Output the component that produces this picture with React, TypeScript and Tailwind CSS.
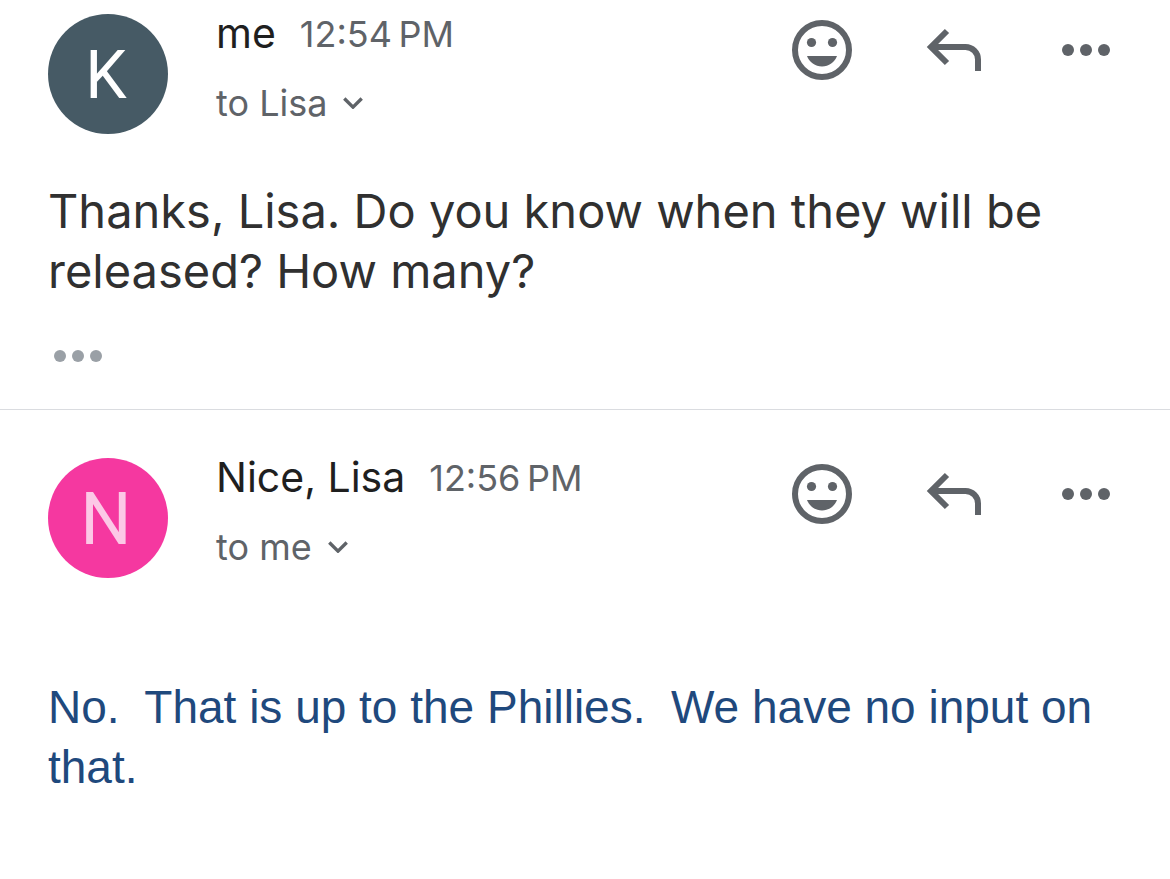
interface Message {
  id: string;
  initial: string;
  avatarClass: string;
  sender: string;
  time: string;
  recipient: string;
  body: string;
  bodyClass: string;
  hasQuoted: boolean;
}

const messages: Message[] = [
  {
    id: 'first',
    initial: 'K',
    avatarClass: 'bg-[#465a65] pt-0.5 pr-1 text-[66px] text-white',
    sender: 'me',
    time: '12:54\u2009PM',
    recipient: 'to Lisa',
    body: 'Thanks, Lisa. Do you know when they will be released? How many?',
    bodyClass: 'mt-[47px] text-[47px] text-[#303030]',
    hasQuoted: true,
  },
  {
    id: 'second',
    initial: 'N',
    avatarClass: 'bg-[#f538a0] pt-1 pr-1 text-[72px] text-[#fcc8e6]',
    sender: 'Nice, Lisa',
    time: '12:56\u2009PM',
    recipient: 'to me',
    body: 'No.\u00a0 That is up to the Phillies.\u00a0 We have no input on that.',
    bodyClass: "mt-[99px] font-['Liberation_Sans',Arial,sans-serif] text-[46px] text-[#1f497d]",
    hasQuoted: false,
  },
];

function SmileIcon() {
  return (
    <svg viewBox="0 0 72 72" className="size-[72px]" fill="currentColor" aria-hidden="true">
      <circle cx="36" cy="36" r="27" fill="none" stroke="currentColor" strokeWidth="6" />
      <circle cx="25.5" cy="28.5" r="4.6" />
      <circle cx="46.5" cy="28.5" r="4.6" />
      <path d="M21 42h30c-2.3 6.2-8.2 10.4-15 10.4S23.3 48.2 21 42z" />
    </svg>
  );
}

function ReplyIcon() {
  return (
    <svg viewBox="0 0 72 72" className="size-[72px]" fill="none" stroke="currentColor" strokeWidth="6" aria-hidden="true">
      <path d="M29 17L13 33l16 16" />
      <path d="M13 33h34.5a12.5 12.5 0 0 1 12.5 12.5V57" />
    </svg>
  );
}

function DotsIcon() {
  return (
    <svg viewBox="0 0 60 12" className="h-3 w-[60px]" fill="currentColor" aria-hidden="true">
      <circle cx="12" cy="6" r="6" />
      <circle cx="30" cy="6" r="6" />
      <circle cx="48" cy="6" r="6" />
    </svg>
  );
}

function ChevronIcon() {
  return (
    <svg viewBox="0 0 20 12" className="h-3 w-5" fill="none" stroke="currentColor" strokeWidth="3.4" aria-hidden="true">
      <path d="M1.3 1.5L10 10.1l8.7-8.6" />
    </svg>
  );
}

function MessageItem({ message }: { message: Message }) {
  return (
    <article className="px-12">
      <header className="flex items-start">
        <div className={`flex size-[120px] shrink-0 items-center justify-center rounded-full font-[Roboto,sans-serif] ${message.avatarClass}`}>
          {message.initial}
        </div>
        <div className="ml-12 flex min-w-0 flex-1 flex-col">
          <div className="flex h-10 items-center gap-6">
            <h2 className="text-[41px] text-[#1f1f1f]">{message.sender}</h2>
            <time className="text-[36px] text-[#5f6368]">{message.time}</time>
          </div>
          <button className="mt-[27px] flex h-11 items-center gap-4 self-start text-[36px] text-[#5f6368]">
            {message.recipient}
            <ChevronIcon />
          </button>
        </div>
        <div className="flex shrink-0 gap-[60px] text-[#5f6368]">
          <button aria-label="Add reaction"><SmileIcon /></button>
          <button aria-label="Reply"><ReplyIcon /></button>
          <button aria-label="More options" className="flex size-[72px] items-center justify-center">
            <DotsIcon />
          </button>
        </div>
      </header>
      <p className={`leading-[60px] ${message.bodyClass}`}>{message.body}</p>
      {message.hasQuoted && (
        <button aria-label="Show quoted text" className="mt-[49px] block text-[#9aa0a6]">
          <DotsIcon />
        </button>
      )}
    </article>
  );
}

export default function App() {
  return (
    <main className="min-h-screen bg-white pt-3.5 font-[Inter,sans-serif]">
      <MessageItem message={messages[0]} />
      <hr className="mt-[47px] mb-12 border-t border-[#dadce0]" />
      <MessageItem message={messages[1]} />
    </main>
  );
}
